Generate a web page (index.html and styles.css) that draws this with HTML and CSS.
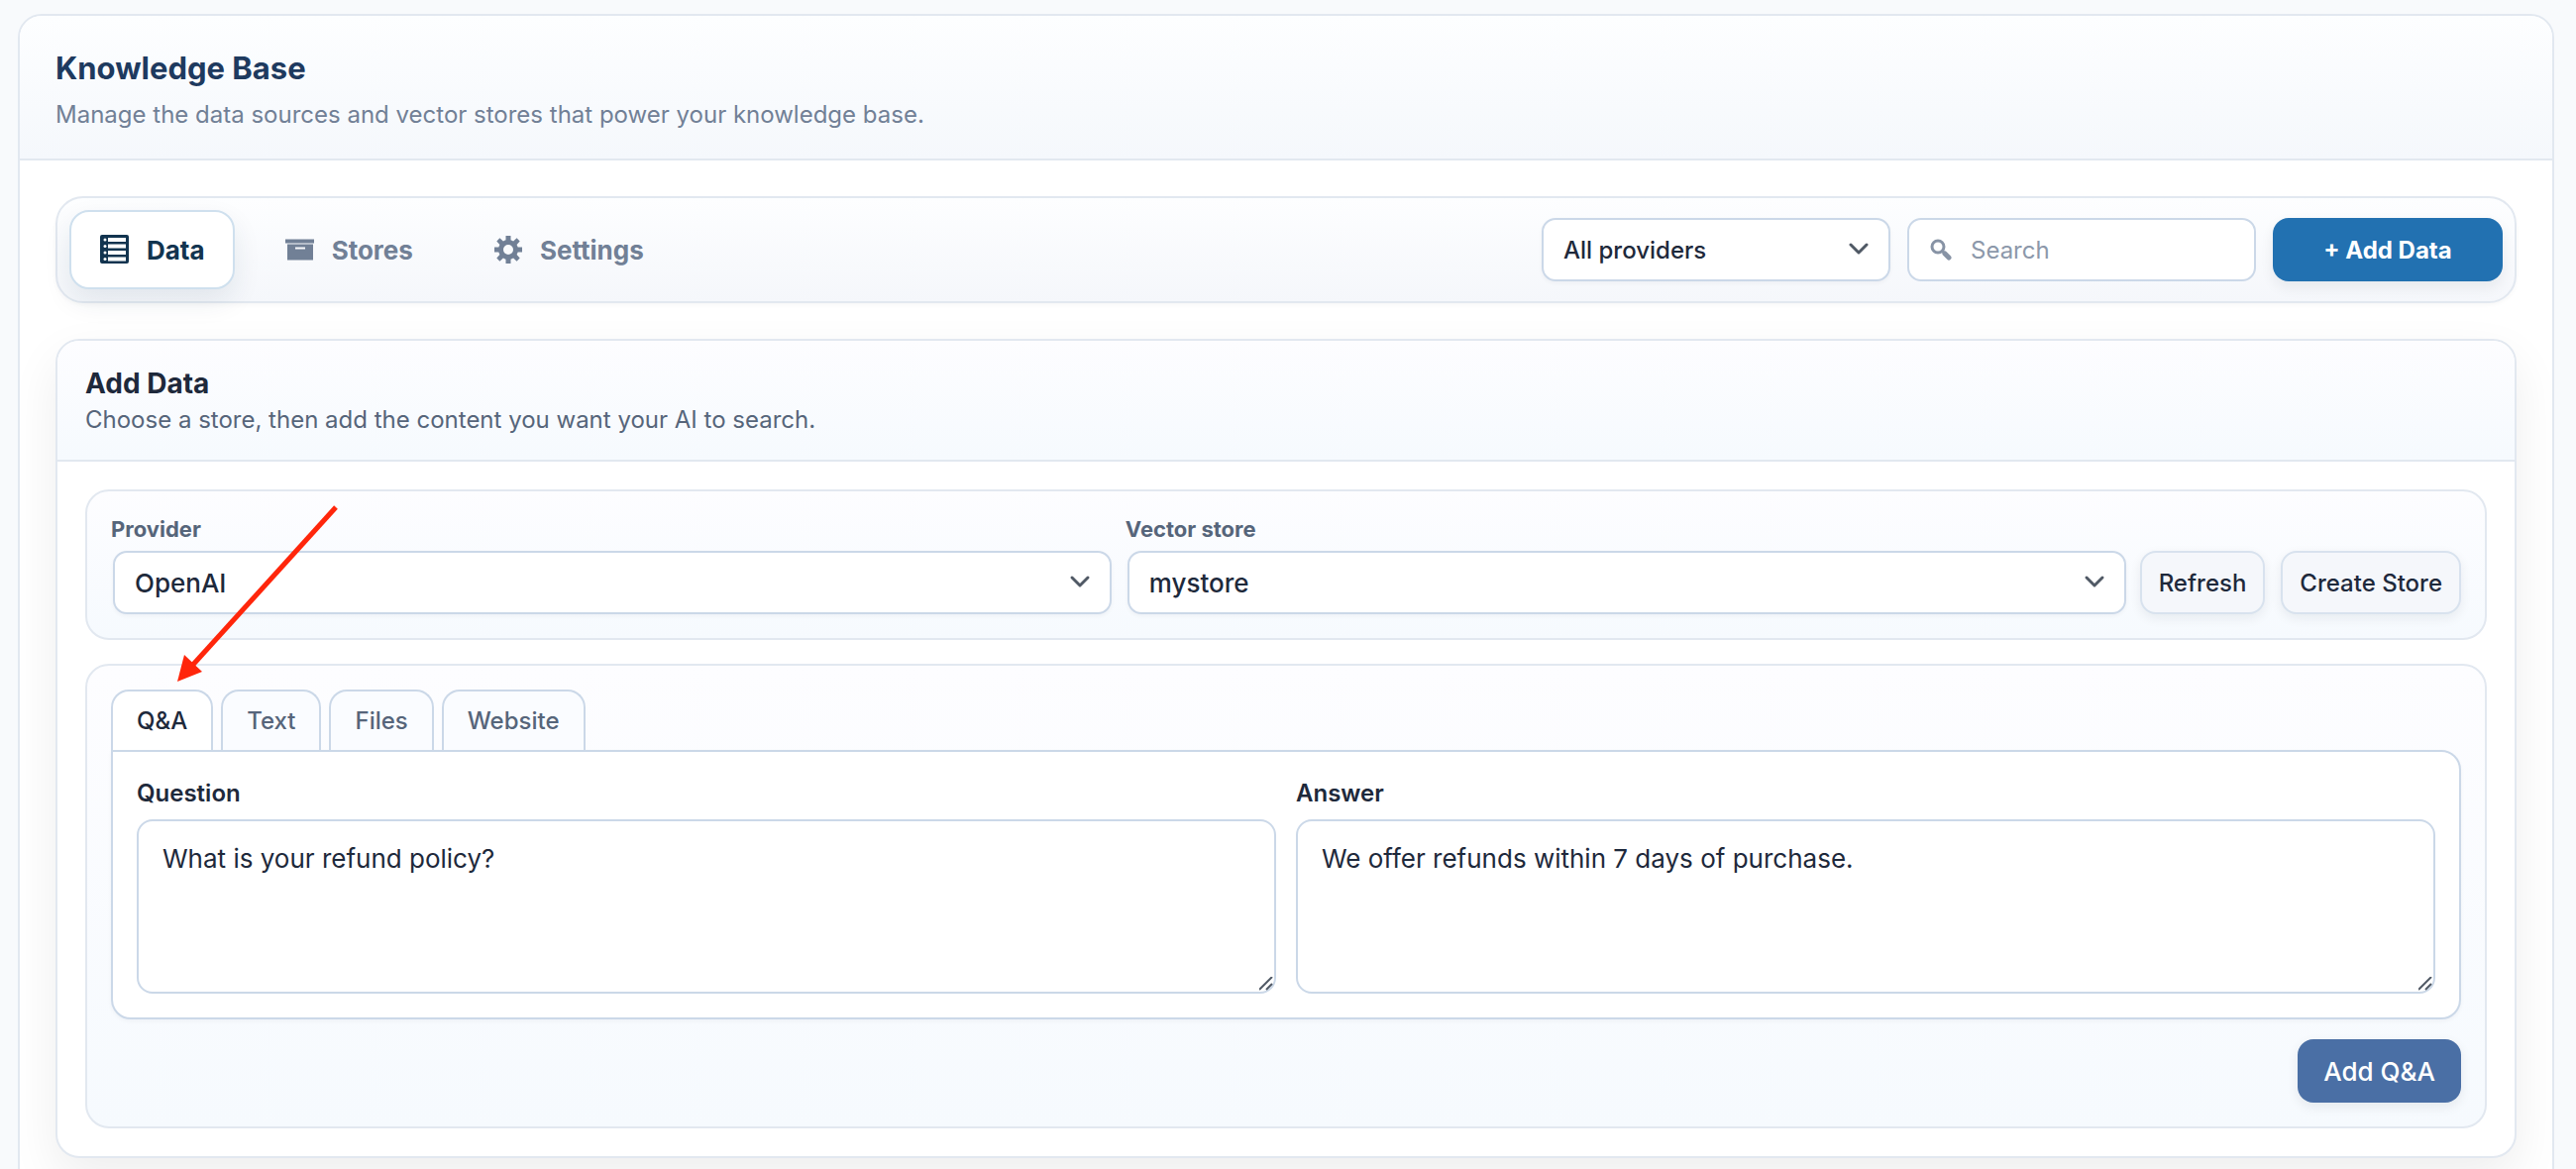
FILE: index.html
```html
<!DOCTYPE html>
<html lang="en">
<head>
<meta charset="utf-8">
<title>Knowledge Base</title>
<link rel="stylesheet" href="styles.css">
</head>
<body>
<main class="page">
  <header class="page-header">
    <h1 class="page-title">Knowledge Base</h1>
    <p class="page-subtitle">Manage the data sources and vector stores that power your knowledge base.</p>
  </header>
  <div class="page-body">
    <div class="toolbar">
      <nav class="nav-tabs">
        <button class="nav-tab is-active" type="button">
          <svg class="icon" viewBox="0 0 40 40" aria-hidden="true"><path fill="currentColor" fill-rule="evenodd" d="M7 5h25a2 2 0 0 1 2 2v25a2 2 0 0 1-2 2H7a2 2 0 0 1-2-2V7a2 2 0 0 1 2-2zM13 8v4h18V8zM13 14.500v4h18v-4zM13 21v4h18v-4zM13 27.500v4h18v-4z"/><g fill="#fff"><circle cx="10" cy="10" r="1.500"/><circle cx="10" cy="16.500" r="1.500"/><circle cx="10" cy="23" r="1.500"/><circle cx="10" cy="29.500" r="1.500"/></g></svg>
          Data
        </button>
        <button class="nav-tab" type="button">
          <svg class="icon" viewBox="0 0 40 40" aria-hidden="true"><path fill="currentColor" fill-rule="evenodd" d="M5 9.500h29v4H5zM7 14.500h26v16H7zM15 17.500v2h10v-2z"/></svg>
          Stores
        </button>
        <button class="nav-tab" type="button">
          <svg class="icon" viewBox="-20 -20 40 40" aria-hidden="true"><path fill="currentColor" fill-rule="evenodd" d="M-2.500 -14h5v4.300l2.600 1.100 3.500-3.100 3.100 3.100-3.100 3.500 1.100 2.600H14v5H9.700l-1.100 2.600 3.100 3.500-3.100 3.100-3.500-3.100-2.600 1.100V14h-5V9.700l-2.600-1.100-3.500 3.100-3.100-3.100 3.100-3.500-1.100-2.600H-14v-5h4.300l1.100-2.600-3.100-3.500 3.100-3.100 3.500 3.100 2.600-1.100zM0 -5a5 5 0 1 0 0 10a5 5 0 1 0 0 -10z"/></svg>
          Settings
        </button>
      </nav>
      <div class="toolbar-actions">
        <select class="select provider-filter" aria-label="Filter by provider"><option>All providers</option></select>
        <label class="search">
          <svg class="search-icon" viewBox="0 0 24 24" aria-hidden="true"><circle cx="9" cy="9" r="6" fill="none" stroke="currentColor" stroke-width="3"/><path d="M13 13l3 3" stroke="currentColor" stroke-width="3"/><path d="M16 16l4 4" stroke="currentColor" stroke-width="5" stroke-linecap="round"/></svg>
          <input class="search-input" type="search" placeholder="Search" aria-label="Search">
        </label>
        <button class="button button-add" type="button">+ Add Data</button>
      </div>
    </div>

    <section class="card">
      <header class="card-header">
        <h2 class="card-title">Add Data</h2>
        <p class="card-subtitle">Choose a store, then add the content you want your AI to search.</p>
      </header>
      <div class="card-body">
        <div class="panel store-row">
          <div class="field">
            <label class="field-label" for="provider">Provider</label>
            <select class="select" id="provider"><option>OpenAI</option></select>
          </div>
          <div class="field">
            <label class="field-label" for="store">Vector store</label>
            <select class="select" id="store"><option>mystore</option></select>
          </div>
          <div class="store-buttons">
            <button class="button button-plain" type="button">Refresh</button>
            <button class="button button-plain" type="button">Create Store</button>
          </div>
        </div>

        <div class="panel source-panel">
          <div class="source-tabs" role="tablist">
            <button class="source-tab is-active" type="button" role="tab" aria-selected="true">Q&amp;A</button>
            <button class="source-tab" type="button" role="tab">Text</button>
            <button class="source-tab" type="button" role="tab">Files</button>
            <button class="source-tab" type="button" role="tab">Website</button>
          </div>
          <div class="qa-form" role="tabpanel">
            <div class="qa-field">
              <label class="qa-label" for="question">Question</label>
              <textarea class="textarea" id="question">What is your refund policy?</textarea>
            </div>
            <div class="qa-field">
              <label class="qa-label" for="answer">Answer</label>
              <textarea class="textarea" id="answer">We offer refunds within 7 days of purchase.</textarea>
            </div>
          </div>
          <div class="form-actions">
            <button class="button button-submit" type="button">Add Q&amp;A</button>
          </div>
          <svg class="pointer" viewBox="0 0 168 184" aria-hidden="true"><path d="M163 4L16 166" stroke="#ff260b" stroke-width="5" fill="none"/><path d="M3 180L10 153L28 170Z" fill="#ff260b"/></svg>
        </div>
      </div>
    </section>
  </div>
</main>
</body>
</html>
```
FILE: styles.css
```css
* { box-sizing: border-box; }

body {
  margin: 0;
  height: 100vh;
  overflow: hidden;
  padding: 14px 22px 0 18px;
  background: #f8fafc;
  color: #1e293b;
  font-family: Inter, "Liberation Sans", sans-serif;
  font-size: 26px;
}

h1, h2, p { margin: 0; }
button, input, select, textarea { font: inherit; color: inherit; margin: 0; }

.page {
  border: 2px solid #e2e8f0;
  border-radius: 24px;
  background: #fff;
  overflow: hidden;
}

.page-header {
  padding: 32px 36px 28px;
  border-bottom: 2px solid #e2e8f0;
  background: linear-gradient(#fdfeff, #f5f8fc);
}
.page-title { font-size: 31px; line-height: 42px; font-weight: 700; color: #1e3a5f; }
.page-subtitle { margin-top: 10px; font-size: 24px; line-height: 32px; color: #718096; }

.page-body { padding: 36px; display: flex; flex-direction: column; gap: 36px; }

.toolbar {
  display: flex;
  align-items: center;
  justify-content: space-between;
  padding: 12px;
  border: 2px solid #e2e8f0;
  border-radius: 28px;
  background: linear-gradient(#fdfeff, #f5f7fb);
  box-shadow: 0 2px 4px rgba(15, 23, 42, 0.03);
}
.nav-tabs { display: flex; gap: 20px; }
.nav-tab {
  display: flex;
  align-items: center;
  gap: 12px;
  height: 80px;
  padding: 0 28px 0 24px;
  border: 2px solid transparent;
  border-radius: 20px;
  background: none;
  color: #718096;
  font-weight: 700;
}
.nav-tab.is-active {
  border-color: #cfe0ee;
  background: #fff;
  color: #12344f;
  box-shadow: 0 12px 28px rgba(18, 52, 79, 0.09);
}
.icon { width: 40px; height: 40px; flex: none; }

.toolbar-actions { display: flex; align-items: center; gap: 17px; }

.select {
  width: 100%;
  height: 64px;
  padding: 0 60px 0 20px;
  border: 2px solid #cbd8e8;
  border-radius: 14px;
  appearance: none;
  background: #fff url("data:image/svg+xml,%3Csvg xmlns='http://www.w3.org/2000/svg' width='24' height='16' fill='none' stroke='%23505965' stroke-width='3' stroke-linecap='round' stroke-linejoin='round'%3E%3Cpath d='M4 3l8 8 8-8'/%3E%3C/svg%3E") no-repeat right 18px center;
  box-shadow: 0 2px 4px rgba(15, 23, 42, 0.04);
  font-weight: 500;
}
.provider-filter { width: 352px; font-size: 24px; }

.search { position: relative; width: 352px; }
.search-input {
  display: block;
  width: 100%;
  height: 64px;
  padding: 0 20px 0 62px;
  border: 2px solid #cbd8e8;
  border-radius: 14px;
  background: #fff;
  font-size: 24px;
}
.search-input::placeholder { color: #8c98aa; opacity: 1; }
.search-icon { position: absolute; left: 22px; top: 20px; width: 24px; height: 24px; color: #8793a5; }

.button { height: 64px; border: 0; border-radius: 16px; color: #fff; font-weight: 600; font-size: 24px; }
.button-add { width: 232px; background: #2271b1; font-weight: 700; box-shadow: 0 6px 14px rgba(15, 23, 42, 0.07); }

.card {
  border: 2px solid #e2e8f0;
  border-radius: 24px;
  background: #fff;
  box-shadow: 0 20px 50px rgba(0, 0, 0, 0.07);
}
.card-header {
  padding: 24px 28px;
  border-bottom: 2px solid #e2e8f0;
  border-radius: 22px 22px 0 0;
  background: linear-gradient(#fdfdff, #f6fafe);
}
.card-title { font-size: 28px; line-height: 38px; font-weight: 700; }
.card-subtitle { margin-top: 2px; font-size: 24px; line-height: 32px; color: #56657a; }
.card-body { padding: 28px; display: flex; flex-direction: column; gap: 24px; }

.panel {
  padding: 24px;
  border: 2px solid #e2e8f0;
  border-radius: 24px;
  background: linear-gradient(#fdfdff, #f6fafe);
}
.store-row { display: flex; align-items: flex-end; gap: 12px; }
.field { flex: 1 1 0; min-width: 0; padding: 0 2px; }
.field-label { display: block; margin: 0 -2px 8px; font-size: 22px; line-height: 28px; font-weight: 700; color: #56657a; }
.store-buttons { display: flex; gap: 16px; }
.button-plain {
  padding: 0 17px;
  border: 2px solid #d8e2ee;
  background: #f5f7fb;
  color: #1e293b;
  font-weight: 500;
  box-shadow: 0 4px 12px rgba(15, 23, 42, 0.07);
}

.source-panel { position: relative; }
.source-tabs { display: flex; gap: 8px; }
.source-tab {
  height: 61px;
  padding: 0 24px;
  border: 2px solid #cbd8e8;
  border-bottom: 0;
  border-radius: 18px 18px 0 0;
  background: #fafcff;
  color: #56657a;
  font-size: 24px;
  font-weight: 500;
}
.source-tab.is-active { background: #fff; color: #1e293b; }

.qa-form {
  display: grid;
  grid-template-columns: 1fr 1fr;
  gap: 20px;
  padding: 24px;
  border: 2px solid #cbd8e8;
  border-radius: 0 20px 20px 20px;
  background: #fff;
  box-shadow: 0 2px 4px rgba(15, 23, 42, 0.04);
}
.qa-label { display: block; margin-bottom: 8px; font-size: 24px; line-height: 36px; font-weight: 600; }
.textarea {
  display: block;
  width: 100%;
  height: 176px;
  padding: 20px 24px;
  border: 2px solid #cbd8e8;
  border-radius: 16px;
  background: #fff;
  line-height: 36px;
  resize: vertical;
}
.textarea::-webkit-resizer {
  background: url("data:image/svg+xml,%3Csvg xmlns='http://www.w3.org/2000/svg' width='16' height='16' fill='none' stroke='%23505965' stroke-width='2'%3E%3Cpath d='M1 14L14 1M8 14l6-6'/%3E%3C/svg%3E") no-repeat right bottom;
}
.form-actions { display: flex; justify-content: flex-end; margin-top: 20px; }
.button-submit { padding: 0 26px; background: #4a6fa5; font-size: 26px; font-weight: 500; box-shadow: 0 4px 12px rgba(15, 23, 42, 0.08); }

/* Arrow that points out the Q&A tab */
.pointer { position: absolute; left: 88px; top: -164px; width: 168px; height: 184px; pointer-events: none; }
```
